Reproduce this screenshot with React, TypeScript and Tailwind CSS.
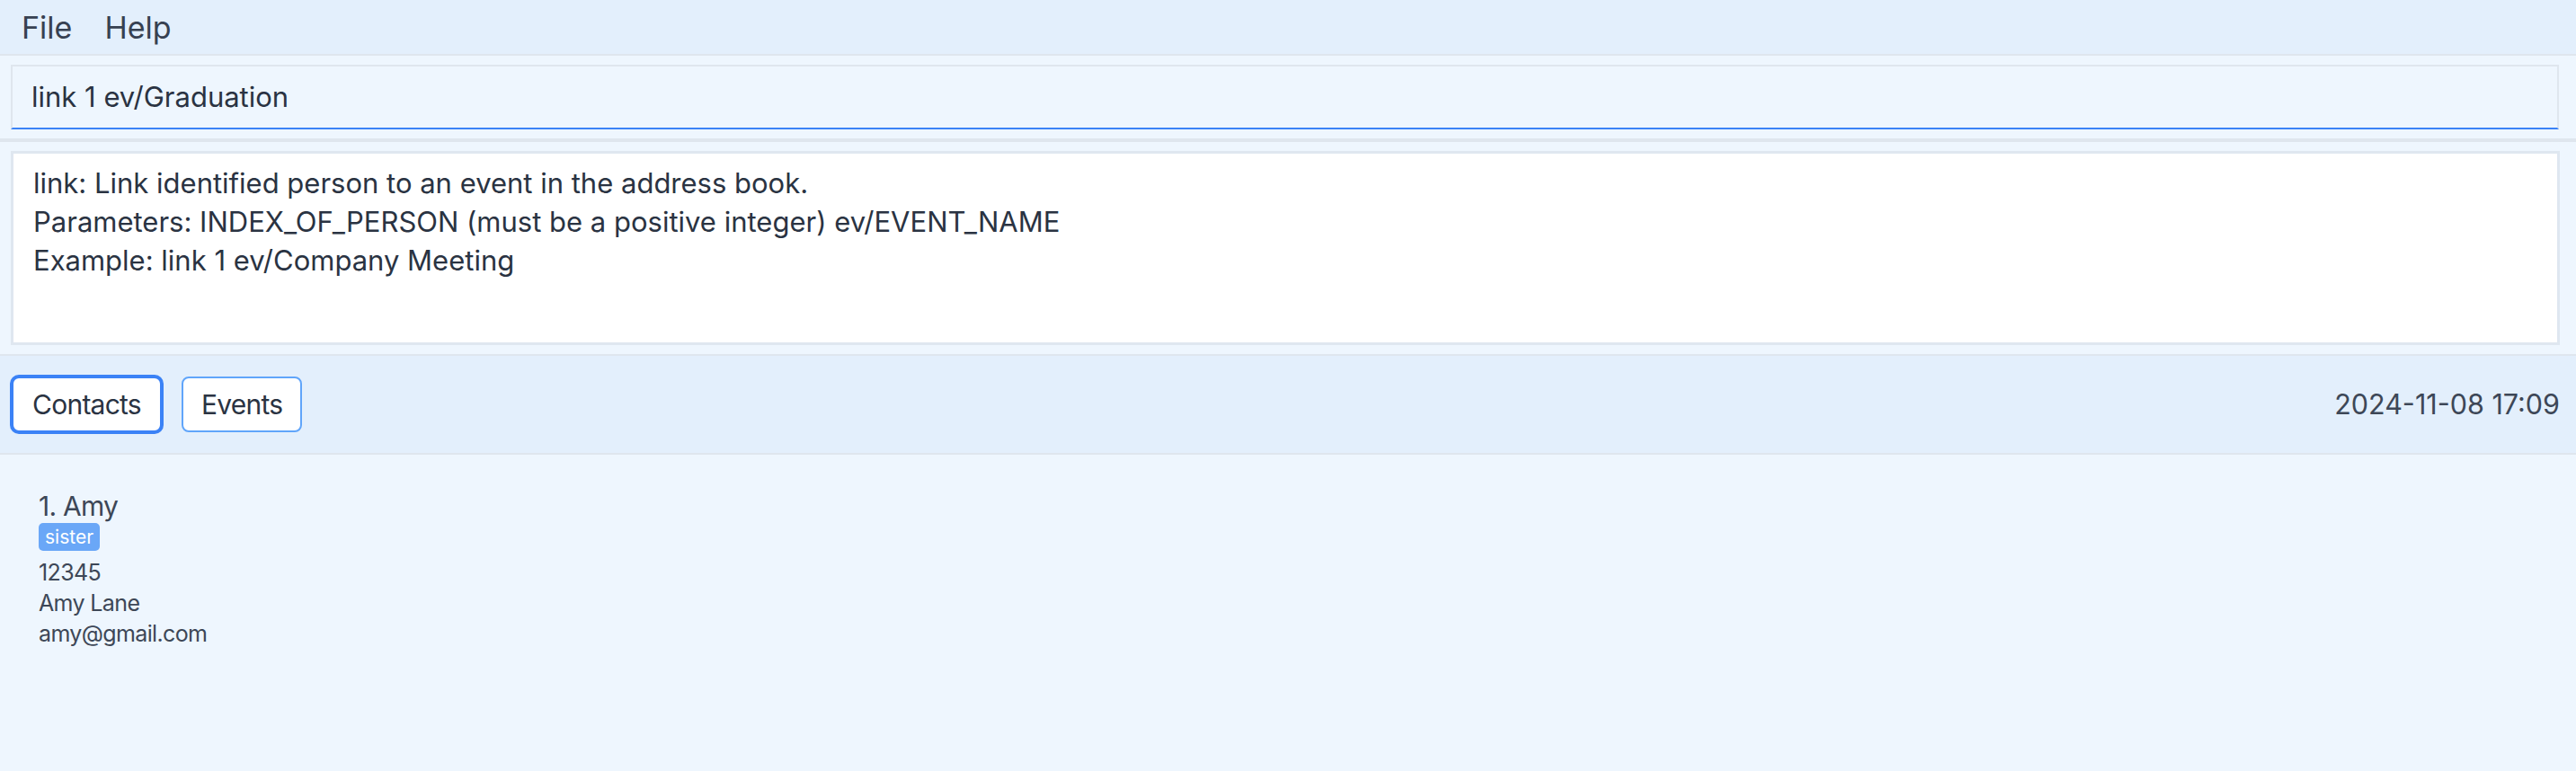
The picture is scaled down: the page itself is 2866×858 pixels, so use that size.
import React from "react"

function MenuBar() {
  return (
    <div className="flex h-[62px] items-center gap-[36px] border-b-2 border-[#dfe6ee] bg-[#e3effc] pl-[24px] text-[34px] text-[#374151]">
      <span>File</span>
      <span>Help</span>
    </div>
  )
}

function CommandBox() {
  return (
    <div className="border-b-4 border-[#dfe6ee] bg-[#eef6fe] pb-[10px] pl-3 pr-[19px] pt-[10px]">
      <div className="flex h-[72px] items-center border-2 border-b-[#3b82f6] border-l-[#dfe6ee] border-r-[#dfe6ee] border-t-[#dfe6ee] pl-[21px] text-[31px] text-[#2a3342]">
        link 1 ev/Graduation
      </div>
    </div>
  )
}

function ResultBox() {
  return (
    <div className="border-b-2 border-[#dfe6ee] bg-[#eef6fe] pb-[10px] pl-3 pr-[18px] pt-[10px]">
      <div className="h-[216px] border-[3px] border-[#dfe7f0] bg-white pl-[22px] pt-[11px] text-[31px] leading-[43px] text-[#2a3342]">
        <div>link: Link identified person to an event in the address book.</div>
        <div>Parameters: INDEX_OF_PERSON (must be a positive integer) ev/EVENT_NAME</div>
        <div>Example: link 1 ev/Company Meeting</div>
      </div>
    </div>
  )
}

function TabBar() {
  return (
    <div className="flex h-[110px] items-center border-b-2 border-[#dfe6ee] bg-[#e3effc] pl-[13px] pr-[18px]">
      <div className="flex items-center gap-[22px]">
        <button className="flex h-[62px] items-center rounded-[8px] border-2 border-[#3b82f6] bg-white px-[21px] text-[30px] tracking-tight text-[#2a3342] ring-2 ring-[#3b82f6]">
          Contacts
        </button>
        <button className="flex h-[62px] items-center rounded-[8px] border-2 border-[#60a5fa] bg-white px-[20px] text-[30px] tracking-tight text-[#2a3342]">
          Events
        </button>
      </div>
      <div className="ml-auto text-[30.5px] text-[#3d4757]">2024-11-08 17:09</div>
    </div>
  )
}

function ContactCard() {
  return (
    <div className="pl-[43px] pt-[39px] text-[#3d4757]">
      <div className="text-[30px] leading-[36px] tracking-tight">1. Amy</div>
      <div className="mt-px flex">
        <span className="flex h-[31px] items-center rounded-[5px] bg-[#6aa7f7] px-[7px] text-[21px] text-white">sister</span>
      </div>
      <div className="mt-[7px] text-[25px] leading-[34px] tracking-tight">
        <div>12345</div>
        <div>Amy Lane</div>
        <div>amy@gmail.com</div>
      </div>
    </div>
  )
}

export default function App() {
  return (
    <div className="flex h-[858px] w-full flex-col overflow-hidden bg-[#eef6fe] font-[Inter,sans-serif]">
      <MenuBar />
      <CommandBox />
      <ResultBox />
      <TabBar />
      <div className="flex-1 bg-[#eef6fe]">
        <ContactCard />
      </div>
    </div>
  )
}
